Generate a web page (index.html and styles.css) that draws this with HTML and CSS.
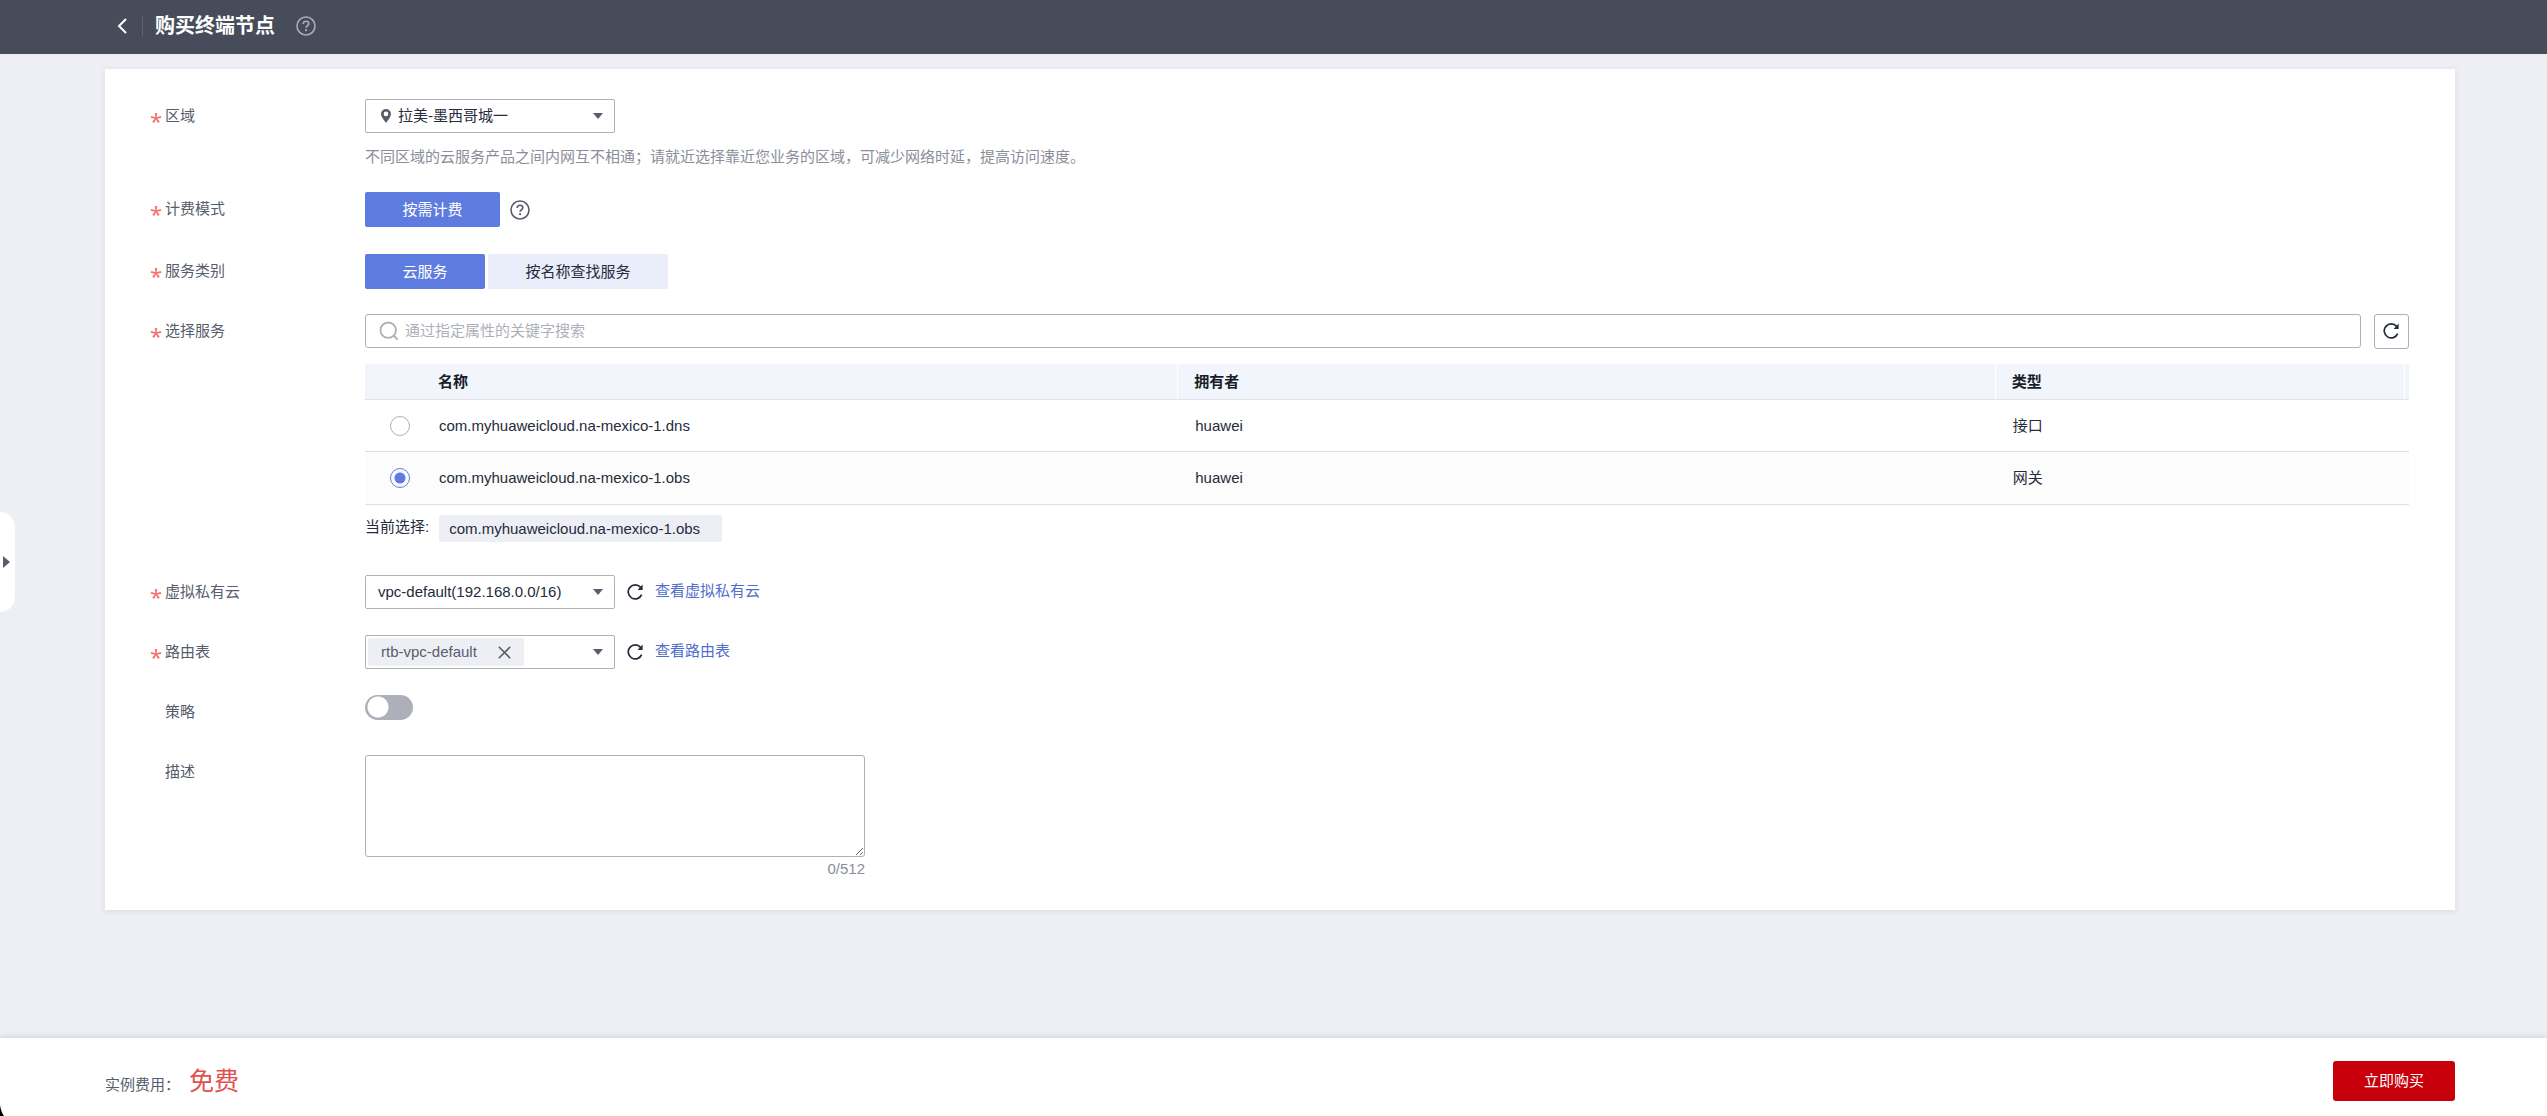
FILE: index.html
```html
<!DOCTYPE html>
<html lang="zh-CN">
<head>
<meta charset="utf-8">
<meta name="viewport" content="width=device-width, initial-scale=1">
<title>购买终端节点</title>
<link rel="stylesheet" href="styles.css">
</head>
<body>
<svg class="sprite" aria-hidden="true">
  <symbol id="i-help" viewBox="0 0 20 20">
    <circle cx="10" cy="10" r="9" fill="none" stroke="currentColor" stroke-width="1.6"/>
    <path d="M7.2 8.1C7.2 6.3 8.4 5.3 10 5.3s2.8 1 2.8 2.5c0 1.9-2.7 2-2.7 4" fill="none" stroke="currentColor" stroke-width="1.6"/>
    <circle cx="10.1" cy="14.2" r="1.1" fill="currentColor"/>
  </symbol>
  <symbol id="i-refresh" viewBox="0 0 16 16">
    <path d="M13.6 3.4A7 7 0 1 0 14.7 10.6" fill="none" stroke="currentColor" stroke-width="1.7"/>
    <path d="M15.6.6V6h-5z" fill="currentColor"/>
  </symbol>
  <symbol id="i-caret" viewBox="0 0 10 6"><path d="M0 0h10L5 6z" fill="currentColor"/></symbol>
</svg>

<header class="topbar">
  <button class="icon-btn back" type="button" aria-label="返回">
    <svg width="10" height="16" viewBox="0 0 10 16"><path d="M9 1L2 8l7 7" fill="none" stroke="currentColor" stroke-width="2"/></svg>
  </button>
  <h1 class="title">购买终端节点</h1>
  <button class="icon-btn title-help" type="button" aria-label="帮助"><svg width="20" height="20"><use href="#i-help"/></svg></button>
</header>

<button class="drawer" type="button" aria-label="展开">
  <svg width="7" height="12" viewBox="0 0 7 12"><path d="M0 0v12l7-6z" fill="currentColor"/></svg>
</button>

<main class="page">
  <form class="card">
    <div class="row">
      <label class="label required" for="region">区域</label>
      <div class="field">
        <div class="select with-pin">
          <select id="region"><option>拉美-墨西哥城一</option></select>
          <svg class="pin" width="10" height="14" viewBox="0 0 10 14"><path fill-rule="evenodd" d="M5 0a5 5 0 0 1 5 5c0 3-3 6-5 9C3 11 0 8 0 5a5 5 0 0 1 5-5zm0 2.6a2.3 2.3 0 1 0 0 4.6 2.3 2.3 0 0 0 0-4.6z" fill="currentColor"/></svg>
          <svg class="caret" width="10" height="6"><use href="#i-caret"/></svg>
        </div>
        <p class="hint">不同区域的云服务产品之间内网互不相通；请就近选择靠近您业务的区域，可减少网络时延，提高访问速度。</p>
      </div>
    </div>

    <div class="row row-billing">
      <span class="label required">计费模式</span>
      <div class="field inline">
        <button class="segment active billing" type="button">按需计费</button>
        <button class="icon-btn" type="button" aria-label="计费说明"><svg width="20" height="20"><use href="#i-help"/></svg></button>
      </div>
    </div>

    <div class="row">
      <span class="label required">服务类别</span>
      <div class="field segments">
        <button class="segment active cloud" type="button">云服务</button>
        <button class="segment by-name" type="button">按名称查找服务</button>
      </div>
    </div>

    <div class="row">
      <label class="label required" for="search">选择服务</label>
      <div class="field">
        <div class="search-line">
          <div class="search">
            <svg width="20" height="20" viewBox="0 0 20 20"><circle cx="9.2" cy="9.2" r="7.7" fill="none" stroke="currentColor" stroke-width="1.8"/><path d="M14.6 14.6L18.6 18.6" stroke="currentColor" stroke-width="2"/></svg>
            <input id="search" type="text" placeholder="通过指定属性的关键字搜索">
          </div>
          <button class="refresh-box" type="button" aria-label="刷新"><svg width="16" height="16"><use href="#i-refresh"/></svg></button>
        </div>
        <table class="services">
          <colgroup><col class="c-radio"><col class="c-name"><col class="c-owner"><col class="c-type"><col class="c-end"></colgroup>
          <thead>
            <tr><th></th><th class="sep" scope="col">名称</th><th class="sep" scope="col">拥有者</th><th class="sep" scope="col">类型</th><th></th></tr>
          </thead>
          <tbody>
            <tr>
              <td><input type="radio" name="service" id="svc-dns"></td>
              <td><label for="svc-dns">com.myhuaweicloud.na-mexico-1.dns</label></td>
              <td>huawei</td><td>接口</td><td></td>
            </tr>
            <tr class="selected">
              <td><input type="radio" name="service" id="svc-obs" checked></td>
              <td><label for="svc-obs">com.myhuaweicloud.na-mexico-1.obs</label></td>
              <td>huawei</td><td>网关</td><td></td>
            </tr>
          </tbody>
        </table>
        <div class="current">
          <span>当前选择:</span>
          <span class="current-tag">com.myhuaweicloud.na-mexico-1.obs</span>
        </div>
      </div>
    </div>

    <div class="row">
      <label class="label required" for="vpc">虚拟私有云</label>
      <div class="field inline">
        <div class="select">
          <select id="vpc"><option>vpc-default(192.168.0.0/16)</option></select>
          <svg class="caret" width="10" height="6"><use href="#i-caret"/></svg>
        </div>
        <button class="icon-btn dark" type="button" aria-label="刷新虚拟私有云"><svg width="16" height="16"><use href="#i-refresh"/></svg></button>
        <a class="link" href="#">查看虚拟私有云</a>
      </div>
    </div>

    <div class="row">
      <span class="label required">路由表</span>
      <div class="field inline">
        <div class="multi">
          <span class="chip">rtb-vpc-default
            <button class="icon-btn" type="button" aria-label="移除"><svg width="13" height="13" viewBox="0 0 13 13"><path d="M.8.8l11.4 11.4M12.2.8L.8 12.2" stroke="currentColor" stroke-width="1.6"/></svg></button>
          </span>
          <button class="icon-btn" type="button" aria-label="选择路由表"><svg width="10" height="6"><use href="#i-caret"/></svg></button>
        </div>
        <button class="icon-btn dark" type="button" aria-label="刷新路由表"><svg width="16" height="16"><use href="#i-refresh"/></svg></button>
        <a class="link" href="#">查看路由表</a>
      </div>
    </div>

    <div class="row">
      <label class="label" for="policy">策略</label>
      <div class="field"><input class="switch" id="policy" type="checkbox" role="switch"></div>
    </div>

    <div class="row">
      <label class="label" for="desc">描述</label>
      <div class="field desc">
        <textarea id="desc" maxlength="512"></textarea>
        <span class="count">0/512</span>
      </div>
    </div>
  </form>
</main>

<footer class="footer">
  <p class="fee">实例费用：<strong>免费</strong></p>
  <button class="buy" type="button">立即购买</button>
  <svg class="corner" width="4" height="11" viewBox="0 0 4 11" aria-hidden="true"><path d="M0 0q1 7 4 11H0z"/></svg>
</footer>
</body>
</html>
```

FILE: styles.css
```css
* { box-sizing: border-box; }

body {
  margin: 0;
  min-height: 100vh;
  display: flex;
  flex-direction: column;
  background: #eeeff5;
  color: #252b3a;
  font: 15px/20px "Liberation Sans", "Noto Sans CJK SC", sans-serif;
}

button, input, select, textarea { font: inherit; color: inherit; }
button { padding: 0; border: 0; background: none; cursor: pointer; }
p, h1 { margin: 0; }
svg { display: block; flex: none; }

.sprite { position: absolute; width: 0; height: 0; }
.icon-btn { display: flex; color: #575d6c; }
.icon-btn.dark { color: #252b3a; }

/* Top bar */
.topbar {
  display: flex;
  align-items: center;
  height: 54px;
  padding: 0 92px 2px 117px;
  background: #464c59;
  color: #fff;
}
.back { color: #fff; }
.title {
  margin-left: 15px;
  padding-left: 12px;
  border-left: 1px solid #5e6472;
  font-size: 20px;
  line-height: 20px;
}
.title-help { margin-left: 21px; color: #a9adb8; }

/* Left drawer handle */
.drawer {
  position: fixed;
  left: 0;
  top: calc(50% + 4px);
  transform: translateY(-50%);
  display: flex;
  align-items: center;
  width: 15px;
  height: 100px;
  padding-left: 3px;
  border-radius: 0 15px 15px 0;
  background: #fff;
  color: #575d6c;
}

/* Form card */
.page { flex: 1; padding: 15px 92px 32px 105px; }
.card {
  display: flex;
  flex-direction: column;
  gap: 25px;
  padding: 30px 46px 31px 45px;
  background: #fff;
  box-shadow: 0 1px 6px rgba(40, 45, 60, .1);
}
.row {
  display: grid;
  grid-template-columns: 215px minmax(0, 1fr);
  min-height: 35px;
}
.row-billing { min-height: 37px; }
.label {
  padding-left: 15px;
  line-height: 34px;
  color: #575d6c;
}
.label.required { padding-left: 0; }
.label.required::before {
  content: "*";
  display: inline-block;
  width: 15px;
  height: 0;
  font: 22px/0 "Noto Sans", sans-serif;
  vertical-align: -8px;
  color: #f66f6a;
}
.inline { display: flex; align-items: center; gap: 12px; height: 34px; }
.row-billing .inline { gap: 10px; height: 35px; }

.select { display: grid; align-items: center; width: 250px; color: #575d6c; }
.select > * { grid-area: 1 / 1; }
.select select {
  appearance: none;
  height: 34px;
  padding: 0 30px 0 12px;
  border: 1px solid #adb0b8;
  border-radius: 2px;
  background: #fff;
  color: #252b3a;
}
.with-pin select { padding-left: 32px; }
.pin, .caret { pointer-events: none; }
.pin { margin-left: 16px; }
.caret { justify-self: end; margin-right: 12px; }
.hint { margin-top: 14px; color: #8a8e99; }

.segments { display: flex; gap: 3px; }
.segment {
  height: 35px;
  border-radius: 2px;
  background: #e9edfa;
}
.segment.active { background: #5e7ce0; color: #fff; }
.billing { width: 135px; }
.cloud { width: 120px; }
.by-name { width: 180px; }

/* Service picker */
.search-line { display: flex; gap: 13px; }
.search {
  flex: 1;
  display: flex;
  align-items: center;
  gap: 6px;
  height: 34px;
  padding-left: 13px;
  border: 1px solid #adb0b8;
  border-radius: 3px;
  color: #adb0b8;
}
.search input {
  flex: 1;
  min-width: 0;
  padding: 0;
  border: 0;
  outline: 0;
  background: none;
  color: #252b3a;
}
.search input::placeholder { color: #adb0b8; opacity: 1; }
.refresh-box {
  display: flex;
  align-items: center;
  justify-content: center;
  width: 35px;
  height: 35px;
  padding: 0 2px 1px 0;
  border: 1px solid #adb0b8;
  border-radius: 3px;
}

.services {
  width: 100%;
  margin-top: 15px;
  border-collapse: separate;
  border-spacing: 0;
  table-layout: fixed;
}
.c-radio { width: 57px; }
.c-name { width: 37%; }
.c-owner { width: 40%; }
.c-type { width: 20%; }
.services th {
  height: 36px;
  padding: 0 0 0 16px;
  border-bottom: 1px solid #dfe1e6;
  background: #f2f5fc;
  color: #191e29;
  text-align: left;
}
.services th:last-child { padding: 0; }
.services .sep { border-right: 1px solid #fff; }
.services td {
  height: 52px;
  padding: 0 0 0 17px;
  border-bottom: 1px solid #dfe1e6;
}
.services td:first-child { padding-left: 25px; }
.services td:last-child { padding: 0; }
.selected td { height: 53px; background: #fcfcfc; }
.services input {
  appearance: none;
  display: block;
  width: 20px;
  height: 20px;
  margin: 0;
  border: 1px solid #adb0b8;
  border-radius: 50%;
}
.services input:checked {
  border-color: #5e7ce0;
  background: radial-gradient(circle, #5e7ce0 0 5px, transparent 6px);
}

.current { display: flex; gap: 10px; margin: 10px 0 8px; line-height: 27px; }
.current > :first-child { line-height: 24px; }
.current-tag { padding: 0 22px 0 10px; border-radius: 2px; background: #eeeff5; }

.link { color: #526ecc; line-height: 20px; padding-bottom: 2px; text-decoration: none; }

.multi {
  display: flex;
  align-items: center;
  justify-content: space-between;
  width: 250px;
  height: 34px;
  padding: 0 11px 0 2px;
  border: 1px solid #adb0b8;
  border-radius: 2px;
}
.chip {
  display: flex;
  align-items: center;
  gap: 21px;
  height: 28px;
  padding: 0 13px;
  border-radius: 2px;
  background: #eeeff5;
  color: #575d6c;
}

.switch {
  appearance: none;
  display: block;
  width: 48px;
  height: 25px;
  margin: 0;
  border-radius: 13px;
  background: radial-gradient(circle at 13px 12px, #fff 0 10px, transparent 11px) #adb0b8;
}
.switch:checked {
  background: radial-gradient(circle at 35px 12px, #fff 0 10px, transparent 11px) #5e7ce0;
}

.desc { display: flex; flex-direction: column; width: 500px; }
.desc textarea {
  height: 102px;
  padding: 6px 12px;
  border: 1px solid #adb0b8;
  border-radius: 3px;
  resize: vertical;
}
.count { margin-top: 2px; text-align: right; color: #8a8e99; }

/* Purchase bar */
.footer {
  position: sticky;
  bottom: 0;
  display: flex;
  align-items: center;
  justify-content: space-between;
  height: 78px;
  padding: 8px 92px 0 105px;
  background: #fff;
  box-shadow: 0 -1px 5px rgba(40, 45, 60, .16);
}
.fee { display: flex; align-items: baseline; gap: 9px; padding-top: 4px; color: #575d6c; }
.fee strong { font-size: 25px; font-weight: 400; color: #e1504c; }
.buy {
  width: 122px;
  height: 40px;
  border-radius: 3px;
  background: #c7000b;
  color: #fff;
}
.corner { position: absolute; left: 0; bottom: 0; }
```
